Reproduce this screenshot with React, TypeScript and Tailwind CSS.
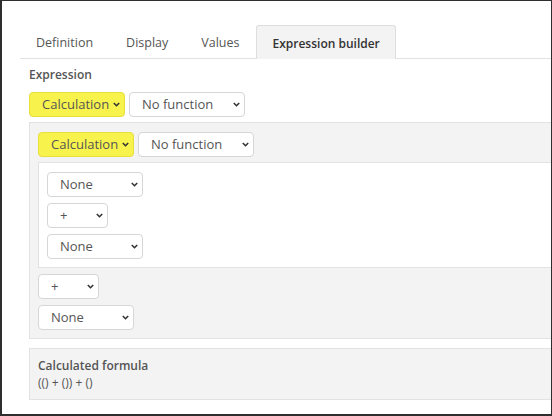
import React from "react";

// Small dropdown look-alike used throughout the builder
interface FakeSelectProps {
  label: string;
  width: string;
  highlight?: boolean;
}

function FakeSelect({ label, width, highlight }: FakeSelectProps) {
  return (
    <div
      className={`${width} h-[25px] flex items-center justify-between rounded-[4px] border pl-[12px] pr-[4px] text-[13px] ${
        highlight
          ? "bg-[#f8f24c] border-[#e6df3c] text-[#555]"
          : "bg-white border-[#d6d6d6] text-[#555]"
      }`}
    >
      <span className="leading-none">{label}</span>
      <svg width="7" height="5" viewBox="0 0 7 5" className="shrink-0">
        <path d="M0.8 1 L3.5 3.7 L6.2 1" fill="none" stroke="#333" strokeWidth="1.6" />
      </svg>
    </div>
  );
}

const tabs = ["Definition", "Display", "Values"];

export default function App() {
  return (
    <div
      className="w-[552px] h-[416px] overflow-hidden bg-white border-t border-r border-l-2 border-b-2 border-[#2e2e2e]"
      style={{ fontFamily: '"Open Sans", "Noto Sans", sans-serif' }}
    >
      <div className="w-[600px] pl-[18px] pt-[24px]">
        {/* Tab bar */}
        <div className="flex h-[34px] border-b border-[#e2e2e2]">
          {tabs.map((t) => (
            <div key={t} className="px-4 pt-[9px] mr-[1px] text-[12.5px] text-[#555]">
              {t}
            </div>
          ))}
          <div className="-mb-px px-[15px] pt-[9px] text-[12px] font-semibold text-[#333] bg-[#f3f3f3] border border-b-0 border-[#dedede] rounded-t-[3px]">
            Expression builder
          </div>
        </div>

        <div className="pl-[9px]">
          <div className="mt-[7px] text-[12px] font-semibold text-[#555] leading-[18px]">
            Expression
          </div>

          <div className="mt-[8px] flex gap-[4px]">
            <FakeSelect label="Calculation" width="w-[96px]" highlight />
            <FakeSelect label="No function" width="w-[116px]" />
          </div>

          {/* Outer calculation panel */}
          <div className="mt-[5px] bg-[#f3f3f3] border border-[#e2e2e2] pl-[8px] pt-[9px] pb-[8px]">
            <div className="flex gap-[4px]">
              <FakeSelect label="Calculation" width="w-[96px]" highlight />
              <FakeSelect label="No function" width="w-[116px]" />
            </div>

            <div className="mt-[5px] bg-white border border-[#e2e2e2] pl-[8px] pt-[9px] pb-[8px] flex flex-col gap-[6px]">
              <FakeSelect label="None" width="w-[96px]" />
              <FakeSelect label="+" width="w-[61px]" />
              <FakeSelect label="None" width="w-[96px]" />
            </div>

            <div className="mt-[6px] flex flex-col gap-[6px]">
              <FakeSelect label="+" width="w-[61px]" />
              <FakeSelect label="None" width="w-[96px]" />
            </div>
          </div>

          {/* Formula preview */}
          <div className="mt-[9px] h-[52px] bg-[#f3f3f3] border border-[#e2e2e2] pl-[8px] pt-[8px]">
            <div className="text-[12px] font-semibold text-[#555] leading-[18px]">
              Calculated formula
            </div>
            <div className="text-[12px] text-[#555] leading-[16px]">(() + ()) + ()</div>
          </div>
        </div>
      </div>
    </div>
  );
}
